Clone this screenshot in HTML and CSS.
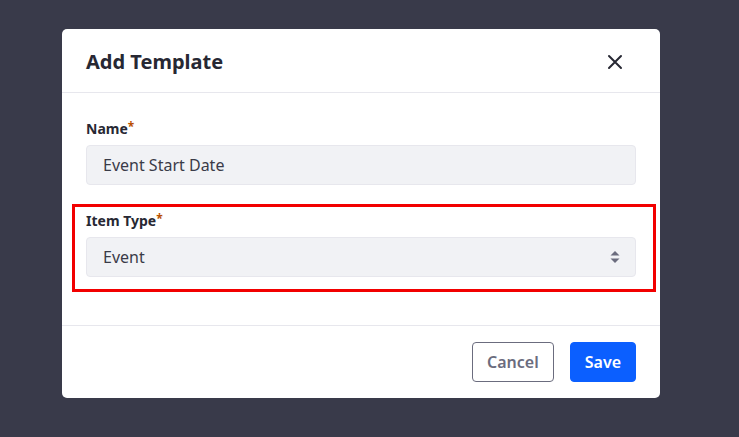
FILE: index.html
```html
<!DOCTYPE html>
<html lang="en">
<head>
<meta charset="utf-8">
<title>Add Template</title>
<link rel="stylesheet" href="styles.css">
</head>
<body>
<div class="modal">
  <div class="modal-header">
    <h1 class="modal-title">Add Template</h1>
    <button class="close" type="button" aria-label="Close">
      <svg width="16" height="16" viewBox="0 0 16 16"><path d="M2 2L14 14M14 2L2 14" stroke="#272833" stroke-width="2" stroke-linecap="round"/></svg>
    </button>
  </div>
  <div class="modal-body">
    <div class="form-group">
      <label class="label">Name<span class="req">*</span></label>
      <div class="input">Event Start Date</div>
    </div>
    <div class="form-group highlighted">
      <label class="label">Item Type<span class="req">*</span></label>
      <div class="input select">
        <span>Event</span>
        <svg class="arrows" width="10" height="14" viewBox="0 0 10 14"><path d="M5 1L9.5 5.5H0.5Z" fill="#6b6c7e"/><path d="M5 13L9.5 8.5H0.5Z" fill="#6b6c7e"/></svg>
      </div>
      <div class="annotation"></div>
    </div>
  </div>
  <div class="modal-footer">
    <button class="btn btn-secondary" type="button">Cancel</button>
    <button class="btn btn-primary" type="button">Save</button>
  </div>
</div>
</body>
</html>
```

FILE: styles.css
```css
html, body {
  margin: 0;
  padding: 0;
}
body {
  background: #393a4a;
  width: 739px;
  height: 437px;
  overflow: hidden;
  font-family: "Noto Sans", "Open Sans", sans-serif;
  color: #272833;
}
.modal {
  margin: 29px 0 0 62px;
  width: 598px;
  background: #fff;
  border-radius: 5px;
}
.modal-header {
  height: 64px;
  box-sizing: border-box;
  border-bottom: 1px solid #e7e7ed;
  display: flex;
  align-items: center;
  justify-content: space-between;
  padding: 2px 37px 0 24px;
}
.modal-title {
  margin: 0;
  font-size: 20px;
  font-weight: 700;
  line-height: 24px;
  color: #272833;
}
.close {
  border: 0;
  background: none;
  padding: 0;
  width: 16px;
  height: 16px;
  display: flex;
}
.modal-body {
  padding: 24px;
}
.form-group {
  margin-bottom: 24px;
  display: flex;
  flex-direction: column;
}
.highlighted {
  position: relative;
}
.annotation {
  position: absolute;
  left: -14px;
  right: -20px;
  top: -5px;
  bottom: -15px;
  border: 3px solid #f20000;
  pointer-events: none;
}
.label {
  font-size: 14px;
  font-weight: 700;
  line-height: 24px;
  margin-bottom: 4px;
  color: #272833;
}
.req {
  color: #b95000;
  font-size: 12px;
  vertical-align: top;
  line-height: 20px;
}
.input {
  height: 40px;
  box-sizing: border-box;
  background: #f1f2f5;
  border: 1px solid #e7e7ed;
  border-radius: 4px;
  padding: 0 16px;
  display: flex;
  align-items: center;
  font-size: 16px;
  color: #3a3b48;
}
.select {
  justify-content: space-between;
  padding-right: 15px;
}
.modal-footer {
  border-top: 1px solid #e7e7ed;
  padding: 16px 24px;
  display: flex;
  justify-content: flex-end;
  gap: 16px;
}
.btn {
  height: 40px;
  box-sizing: border-box;
  border-radius: 4px;
  font-family: inherit;
  font-size: 16px;
  font-weight: 600;
  padding: 0 14px;
  cursor: pointer;
}
.btn-secondary {
  background: #fff;
  border: 1px solid #6b6c7e;
  color: #6b6c7e;
}
.btn-primary {
  background: #0b5fff;
  border: 1px solid #0b5fff;
  color: #fff;
}
```
